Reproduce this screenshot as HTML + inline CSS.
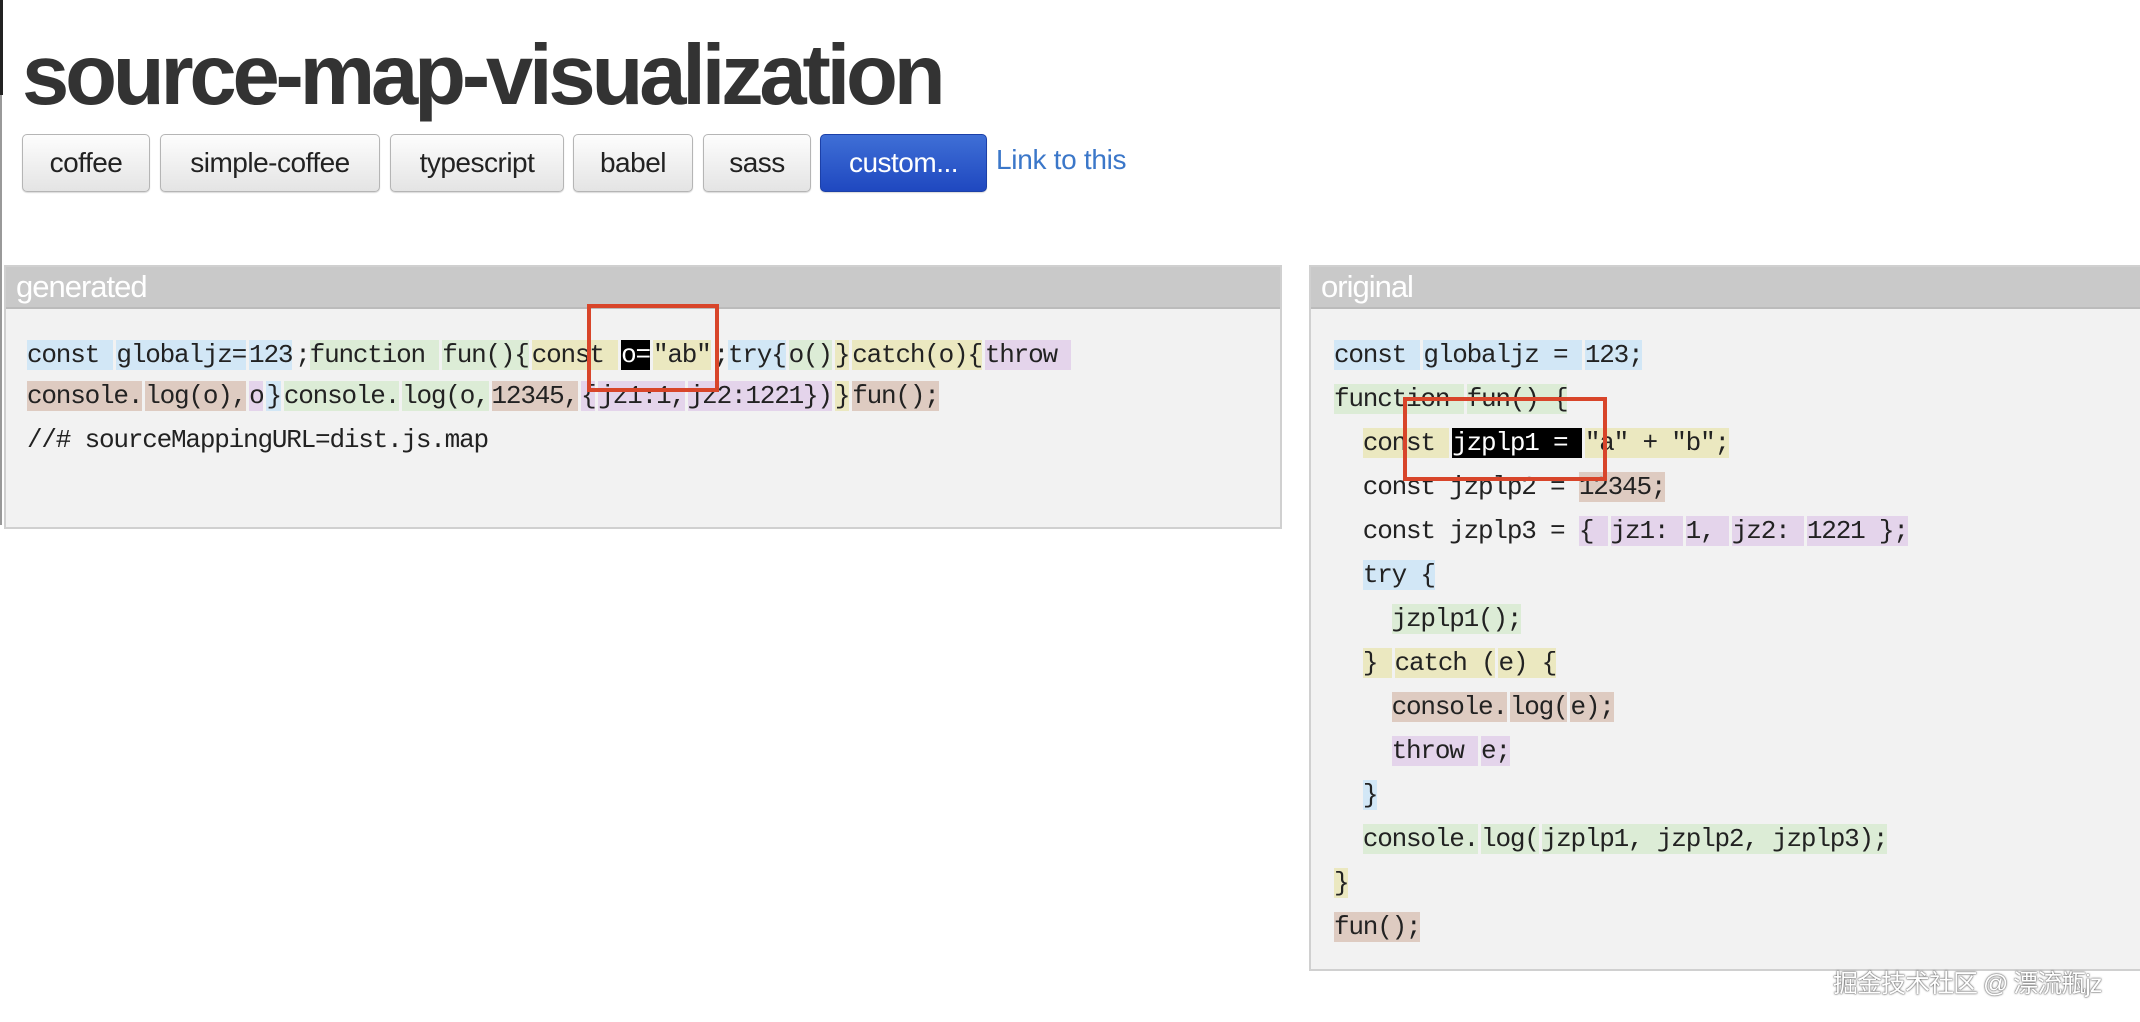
<!DOCTYPE html>
<html><head><meta charset="utf-8"><style>
*{margin:0;padding:0;box-sizing:border-box}
body{width:2140px;height:1022px;background:#fff;position:relative;overflow:hidden;font-family:"Liberation Sans",sans-serif}
.a{position:absolute}
h1{position:absolute;left:22px;top:26px;font-size:85px;font-weight:bold;letter-spacing:-4.2px;color:#333;line-height:100px}
.btn{position:absolute;top:134px;height:58px;border:1px solid #b5b5b5;border-radius:5px;background:linear-gradient(#fdfdfd,#e4e4e4);font-size:28px;color:#222;text-align:center;line-height:56px;letter-spacing:-0.5px;box-shadow:0 1px 1px rgba(0,0,0,.15)}
.btn.c{background:linear-gradient(#3f6fd6,#1f48c0);color:#fff;border-color:#1c40a8}
.panel{position:absolute;top:265px;background:#f2f2f2;border:2px solid #d0d0d0}
.hd{height:42px;background:#c9c9c9;color:#fff;font-size:31px;line-height:40px;padding-left:10px;letter-spacing:-1px;border-bottom:2px solid #bbb}
.ln{position:absolute;height:30px;line-height:30px;font-family:"Liberation Mono",monospace;font-size:26px;letter-spacing:-1.2px;color:#222;white-space:pre}
.ln span{display:inline-block;height:30px;margin-right:3px}
.b{background:#d2e7f6}.g{background:#dcecd6}.y{background:#ebe8c0}.r{background:#decbc1}.p{background:#e4d4eb}.k{background:#000;color:#fff}
.box{position:absolute;border:4px solid #d8452a}
</style></head><body>
<div class="a" style="left:0;top:0;width:3px;height:95px;background:#222"></div>
<div class="a" style="left:0;top:95px;width:2px;height:430px;background:#999"></div>
<h1>source-map-visualization</h1>
<div class="btn" style="left:22px;width:128px">coffee</div>
<div class="btn" style="left:160px;width:220px">simple-coffee</div>
<div class="btn" style="left:390px;width:174px">typescript</div>
<div class="btn" style="left:573px;width:120px">babel</div>
<div class="btn" style="left:703px;width:108px">sass</div>
<div class="btn c" style="left:820px;width:167px">custom...</div>
<div class="a" style="left:996px;top:144px;font-size:28px;color:#3b77c9;letter-spacing:-0.3px">Link to this</div>

<div class="panel" style="left:4px;width:1278px;height:264px"><div class="hd">generated</div></div>
<div class="panel" style="left:1309px;width:835px;height:706px"><div class="hd">original</div></div>

<div class="ln" style="left:27px;top:340px"><span class="b">const </span><span class="b">globaljz=</span><span class="b">123</span>;<span class="g">function </span><span class="g">fun(){</span><span class="y">const </span><span class="k">o=</span><span class="y">"ab"</span>;<span class="b">try{</span><span class="g">o()</span><span class="y">}</span><span class="y">catch(o){</span><span class="p">throw </span></div>
<div class="ln" style="left:27px;top:381px"><span class="r">console.</span><span class="r">log(o),</span><span class="p">o</span><span class="b">}</span><span class="g">console.</span><span class="g">log(o,</span><span class="r">12345,</span><span class="p">{</span><span class="p">jz1:1,</span><span class="p">jz2:1221})</span><span class="y">}</span><span class="r">fun();</span></div>
<div class="ln" style="left:27px;top:425px">//# sourceMappingURL=dist.js.map</div>

<div class="ln" style="left:1334px;top:340px"><span class="b">const </span><span class="b">globaljz = </span><span class="b">123;</span></div>
<div class="ln" style="left:1334px;top:384px"><span class="g">function </span><span class="g">fun() {</span></div>
<div class="ln" style="left:1334px;top:428px">  <span class="y">const </span><span class="k">jzplp1 = </span><span class="y">"a" + "b";</span></div>
<div class="ln" style="left:1334px;top:472px">  const jzplp2 = <span class="r">12345;</span></div>
<div class="ln" style="left:1334px;top:516px">  const jzplp3 = <span class="p">{ </span><span class="p">jz1: </span><span class="p">1, </span><span class="p">jz2: </span><span class="p">1221 };</span></div>
<div class="ln" style="left:1334px;top:560px">  <span class="b">try {</span></div>
<div class="ln" style="left:1334px;top:604px">    <span class="g">jzplp1();</span></div>
<div class="ln" style="left:1334px;top:648px">  <span class="y">} </span><span class="y">catch (</span><span class="y">e) {</span></div>
<div class="ln" style="left:1334px;top:692px">    <span class="r">console.</span><span class="r">log(</span><span class="r">e);</span></div>
<div class="ln" style="left:1334px;top:736px">    <span class="p">throw </span><span class="p">e;</span></div>
<div class="ln" style="left:1334px;top:780px">  <span class="b">}</span></div>
<div class="ln" style="left:1334px;top:824px">  <span class="g">console.</span><span class="g">log(</span><span class="g">jzplp1, jzplp2, jzplp3);</span></div>
<div class="ln" style="left:1334px;top:868px"><span class="y">}</span></div>
<div class="ln" style="left:1334px;top:912px"><span class="r">fun();</span></div>

<div class="box" style="left:587px;top:304px;width:132px;height:88px"></div>
<div class="box" style="left:1403px;top:397px;width:204px;height:84px"></div>

<div class="a" style="left:1833px;top:964px;font-size:25px;color:#fff;text-shadow:0 0 2px #555,0 0 1px #333;font-family:'Liberation Sans','Noto Sans CJK SC',sans-serif;letter-spacing:-1px">掘金技术社区 @ 漂流瓶jz</div>
</body></html>
